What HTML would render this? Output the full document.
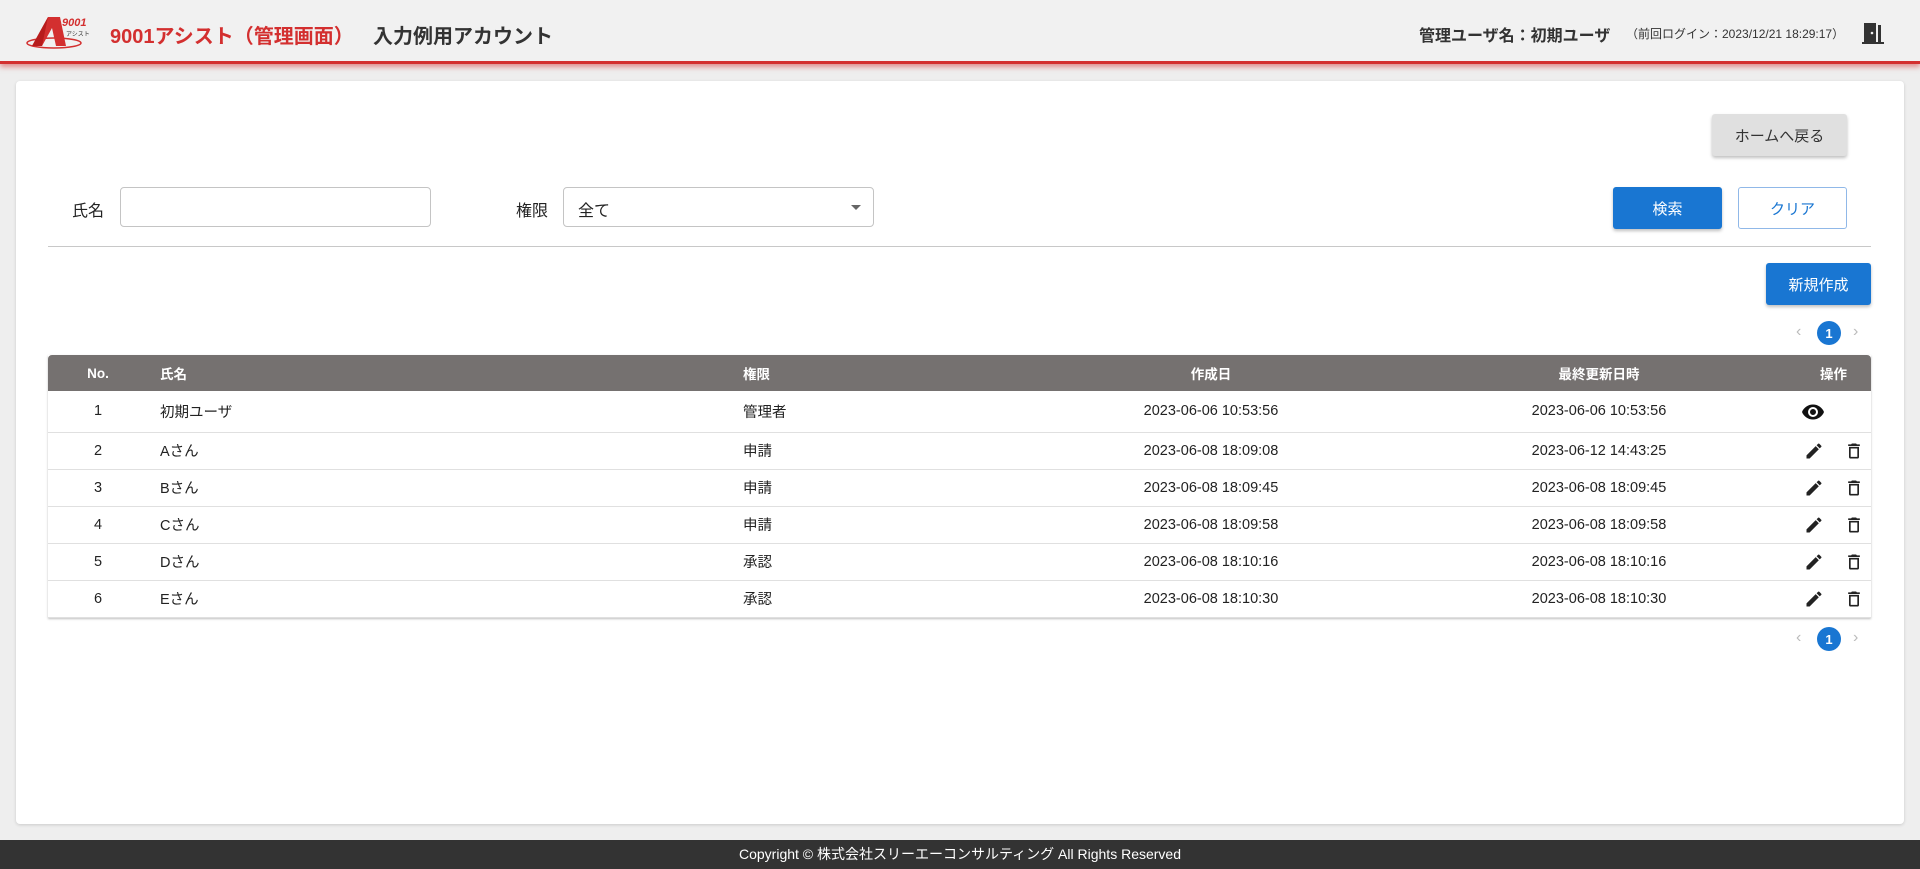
<!DOCTYPE html>
<html><head><meta charset="utf-8"><style>
*{box-sizing:border-box;margin:0;padding:0}
body{width:1920px;height:869px;background:#eeeeee;font-family:"Liberation Sans","Noto Sans CJK JP",sans-serif;color:#222;position:relative;overflow:hidden}
.hdr{position:absolute;left:0;top:0;width:1920px;height:64px;background:#f1f1f1;border-bottom:3px solid #d32f2f;box-shadow:0 3px 5px rgba(211,47,47,.5)}
.abs{position:absolute;white-space:nowrap}
.card{position:absolute;left:16px;top:81px;width:1888px;height:743px;background:#fff;border-radius:4px;box-shadow:0 1px 3px rgba(0,0,0,.15)}
.btn{position:absolute;display:flex;align-items:center;justify-content:center;font-size:15px;border-radius:3px}
.blue{background:#1976d2;color:#fff;box-shadow:0 2px 3px rgba(0,0,0,.25)}
.inp{position:absolute;border:1px solid #c4c4c4;border-radius:4px;background:#fff}
table{position:absolute;left:48px;top:355px;width:1823px;table-layout:fixed;border-collapse:collapse;font-size:14.5px;box-shadow:0 1px 2px rgba(0,0,0,.25)}
th{background:#757170;color:#fff;font-size:13.5px;font-weight:bold;height:36px;white-space:nowrap}
th:first-child{border-top-left-radius:4px}th:last-child{border-top-right-radius:4px}
td{height:37px;border-bottom:1px solid #e0e0e0;white-space:nowrap;vertical-align:middle}
tr.r1 td{height:41px}
.pg{position:absolute;width:24px;height:24px;border-radius:50%;background:#1976d2;color:#fff;font-size:13px;font-weight:bold;display:flex;align-items:center;justify-content:center}
.ar{position:absolute;color:#bbb;font-size:16px}
.foot{position:absolute;left:0;top:840px;width:1920px;height:29px;background:#333;color:#fff;font-size:14px;text-align:center;line-height:29px}
</style></head><body>
<div class="hdr">
 <svg class="abs" style="left:24px;top:14px" width="70" height="36" viewBox="0 0 70 36">
  <ellipse cx="30" cy="29" rx="27" ry="5" fill="none" stroke="#d32f2f" stroke-width="1.5"/>
  <polygon points="8,32 24,3 36,3 42,32 32,32 28,14 18,32" fill="#d32f2f"/>
  <polygon points="24,3 18,32 8,32" fill="#b71c1c"/>
  <text x="38" y="12" font-size="11" font-weight="bold" font-style="italic" fill="#d32f2f" font-family="Liberation Sans">9001</text>
  <text x="42" y="22" font-size="6" fill="#333" font-family="Noto Sans CJK JP">アシスト</text>
 </svg>
 <div class="abs" style="left:110px;top:20px;font-size:20px;font-weight:bold;color:#d32f2f">9001アシスト（管理画面）</div>
 <div class="abs" style="left:373px;top:20px;font-size:20px;font-weight:bold;color:#333">入力例用アカウント</div>
 <div class="abs" style="left:1419px;top:22px;font-size:16px;font-weight:bold;color:#333">管理ユーザ名：初期ユーザ</div>
 <div class="abs" style="left:1626px;top:25px;font-size:12px;color:#333">（前回ログイン：2023/12/21 18:29:17）</div>
 <svg class="abs" style="left:1862px;top:21px" width="22" height="24" viewBox="0 0 22 24"><path d="M2 22V2h12v20z" fill="#333"/><rect x="16" y="4" width="3" height="18" fill="#333"/><circle cx="10" cy="12" r="1.3" fill="#f1f1f1"/><rect x="0" y="21" width="22" height="2" fill="#333"/></svg>
</div>
<div class="card"></div>
<div class="btn" style="left:1712px;top:114px;width:135px;height:42px;background:#e0e0e0;color:#333;box-shadow:0 2px 3px rgba(0,0,0,.25)">ホームへ戻る</div>
<div class="abs" style="left:72px;top:197px;font-size:16px">氏名</div>
<div class="inp" style="left:120px;top:187px;width:311px;height:40px"></div>
<div class="abs" style="left:516px;top:197px;font-size:16px">権限</div>
<div class="inp" style="left:563px;top:187px;width:311px;height:40px"><span class="abs" style="left:14px;top:9px;font-size:16px">全て</span><span class="abs" style="right:12px;top:17px;width:0;height:0;border-left:5px solid transparent;border-right:5px solid transparent;border-top:5px solid #666"></span></div>
<div class="btn blue" style="left:1613px;top:187px;width:109px;height:42px">検索</div>
<div class="btn" style="left:1738px;top:187px;width:109px;height:42px;border:1px solid #90b8e8;color:#1976d2">クリア</div>
<div class="abs" style="left:48px;top:246px;width:1823px;height:1px;background:#c8c8c8"></div>
<div class="btn blue" style="left:1766px;top:263px;width:105px;height:42px">新規作成</div>
<div class="ar" style="left:1796px;top:323px">‹</div><div class="pg" style="left:1817px;top:321px">1</div><div class="ar" style="left:1853px;top:323px">›</div>
<table>
<colgroup><col style="width:100px"><col style="width:595px"><col style="width:285px"><col style="width:366px"><col style="width:410px"><col style="width:67px"></colgroup>
<tr><th>No.</th><th style="text-align:left;padding-left:12px">氏名</th><th style="text-align:left">権限</th><th>作成日</th><th>最終更新日時</th><th style="padding-right:8px">操作</th></tr>
<tbody id="tb"></tbody>
</table>
<div class="ar" style="left:1796px;top:629px">‹</div><div class="pg" style="left:1817px;top:627px">1</div><div class="ar" style="left:1853px;top:629px">›</div>
<div class="foot">Copyright © 株式会社スリーエーコンサルティング All Rights Reserved</div>
<script>
var d=[["1","初期ユーザ","管理者","2023-06-06 10:53:56","2023-06-06 10:53:56"],["2","Aさん","申請","2023-06-08 18:09:08","2023-06-12 14:43:25"],["3","Bさん","申請","2023-06-08 18:09:45","2023-06-08 18:09:45"],["4","Cさん","申請","2023-06-08 18:09:58","2023-06-08 18:09:58"],["5","Dさん","承認","2023-06-08 18:10:16","2023-06-08 18:10:16"],["6","Eさん","承認","2023-06-08 18:10:30","2023-06-08 18:10:30"]];
var eye='<svg width="24" height="24" viewBox="0 0 24 24"><path fill="#111" d="M12 4.5C7 4.5 2.7 7.6 1 12c1.7 4.4 6 7.5 11 7.5s9.3-3.1 11-7.5c-1.7-4.4-6-7.5-11-7.5zM12 17a5 5 0 110-10 5 5 0 010 10zm0-8a3 3 0 100 6 3 3 0 000-6z"/></svg>';
var pen='<svg width="20" height="20" viewBox="0 0 24 24"><path fill="#222" d="M3 17.25V21h3.75L17.8 9.94l-3.75-3.75zM20.7 7.04a1 1 0 000-1.41l-2.34-2.34a1 1 0 00-1.41 0l-1.83 1.83 3.75 3.75z"/></svg>';
var tr='<svg width="20" height="20" viewBox="0 0 24 24"><path fill="#222" d="M6 19a2 2 0 002 2h8a2 2 0 002-2V7H6zm2-10h8v10H8zM15.5 4l-1-1h-5l-1 1H5v2h14V4z"/></svg>';
var h='';d.forEach(function(r,i){h+='<tr'+(i==0?' class="r1"':'')+'><td style="text-align:center">'+r[0]+'</td><td style="padding-left:12px">'+r[1]+'</td><td>'+r[2]+'</td><td style="text-align:center">'+r[3]+'</td><td style="text-align:center">'+r[4]+'</td><td style="position:relative;overflow:visible">'+(i==0?'<span style="position:absolute;left:-3px;top:9px;line-height:0">'+eye+'</span>':'<span style="position:absolute;left:0px;top:8px;line-height:0">'+pen+'</span><span style="position:absolute;left:40px;top:8px;line-height:0">'+tr+'</span>')+'</td></tr>';});
document.getElementById('tb').innerHTML=h;
</script>
</body></html>
